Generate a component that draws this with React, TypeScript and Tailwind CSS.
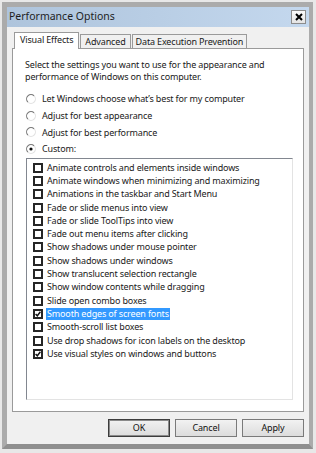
const items = [
  { label: "Animate controls and elements inside windows", checked: false },
  { label: "Animate windows when minimizing and maximizing", checked: false },
  { label: "Animations in the taskbar and Start Menu", checked: false },
  { label: "Fade or slide menus into view", checked: false },
  { label: "Fade or slide ToolTips into view", checked: false },
  { label: "Fade out menu items after clicking", checked: false },
  { label: "Show shadows under mouse pointer", checked: false },
  { label: "Show shadows under windows", checked: false },
  { label: "Show translucent selection rectangle", checked: false },
  { label: "Show window contents while dragging", checked: false },
  { label: "Slide open combo boxes", checked: false },
  { label: "Smooth edges of screen fonts", checked: true, selected: true },
  { label: "Smooth-scroll list boxes", checked: false },
  { label: "Use drop shadows for icon labels on the desktop", checked: false },
  { label: "Use visual styles on windows and buttons", checked: true },
];

const radios = [
  { label: "Let Windows choose what\u2019s best for my computer", checked: false },
  { label: "Adjust for best appearance", checked: false },
  { label: "Adjust for best performance", checked: false },
  { label: "Custom:", checked: true },
];

const Radio = ({ checked }: { checked: boolean }) => (
  <svg width="10" height="10" viewBox="0 0 10 10" className="shrink-0">
    <circle cx="5" cy="5" r="4.3" fill="#fff" />
    <path d="M8.1 1.9 A4.3 4.3 0 0 0 1.9 8.1" stroke="#7a7a7a" strokeWidth="1.1" fill="none" />
    <path d="M1.9 8.1 A4.3 4.3 0 0 0 8.1 1.9" stroke="#e2e2e2" strokeWidth="1.1" fill="none" />
    {checked && <circle cx="5" cy="5" r="1.6" fill="#111" />}
  </svg>
);

const CheckBox = ({ checked }: { checked: boolean }) => (
  <div className="w-[10px] h-[10px] border-2 border-[#262626] bg-white shrink-0 flex items-center justify-center">
    {checked && (
      <svg width="6" height="6" viewBox="0 0 6 6">
        <path d="M0.6 3 L2.3 4.8 L5.4 0.8" stroke="#111" strokeWidth="1.4" fill="none" />
      </svg>
    )}
  </div>
);

const Button = ({ label, primary }: { label: string; primary?: boolean }) => (
  <div
    className={`w-[62px] h-[18px] flex items-center justify-center bg-gradient-to-b from-[#f2f2f2] to-[#dcdcdc] border ${
      primary ? "border-[#3c3c3c] shadow-[inset_0_0_0_1px_#8a8a8a]" : "border-[#7a7a7a]"
    } text-[#111]`}
  >
    {label}
  </div>
);

export default function App() {
  return (
    <div
      className="w-[316px] h-[453px] bg-[#e8e8e8] pt-[2px] pl-[2px] pr-[3px] pb-[4px] text-[9px] tracking-[-0.15px] text-[#1a1a1a]"
      style={{ fontFamily: '"Noto Sans", "Open Sans", sans-serif' }}
    >
      <div className="h-full flex flex-col border-t-[5px] border-l-[5px] border-r-[4px] border-b-[5px] border-[#ababab] border-b-[#8f8f8f]">
        {/* title bar */}
        <div className="h-[20px] shrink-0 flex items-center justify-between pl-[2px] pr-[3px] bg-gradient-to-r from-[#aec4dc] to-[#c4d8ee]">
          <span className="text-[10.5px] tracking-normal text-[#1e1e1e]">Performance Options</span>
          <div className="w-[15px] h-[14px] flex items-center justify-center bg-gradient-to-b from-[#fbfbfb] to-[#e4e4e4] border border-[#8c8c8c]">
            <svg width="8" height="8" viewBox="0 0 8 8">
              <path d="M1 1 L7 7 M7 1 L1 7" stroke="#000" strokeWidth="2" />
            </svg>
          </div>
        </div>

        <div className="flex-1 flex flex-col bg-[#f0f0f0] pt-[4px] pl-[5px] pr-[5px] pb-[7px]">
          {/* tabs */}
          <div className="flex items-end h-[17px] pl-[2px] relative z-10">
            <div className="h-[17px] px-[5px] flex items-center bg-white border border-b-0 border-[#9a9a9a] -mb-px pb-[2px]">
              Visual Effects
            </div>
            <div className="h-[14px] px-[4px] flex items-center bg-[#f0f0f0] border border-b-0 border-[#9a9a9a] ml-[1px]">
              Advanced
            </div>
            <div className="h-[14px] px-[3px] flex items-center bg-[#f0f0f0] border border-b-0 border-[#9a9a9a] ml-[1px]">
              Data Execution Prevention
            </div>
          </div>

          {/* panel */}
          <div className="h-[364px] border border-[#9a9a9a] bg-white px-[12px] pt-[10px] flex flex-col">
            <p className="leading-[12px]">
              Select the settings you want to use for the appearance and
              <br />
              performance of Windows on this computer.
            </p>

            <div className="mt-[11px] flex flex-col gap-[6.7px] pl-[1px]">
              {radios.map((r) => (
                <div key={r.label} className="flex items-center gap-[6px] h-[10px]">
                  <Radio checked={r.checked} />
                  <span>{r.label}</span>
                </div>
              ))}
            </div>

            <div className="mt-[4px] ml-[1px] w-[267px] h-[242px] border border-[#828790] border-b-[#e3e3e3] border-r-[#e3e3e3] bg-white pt-[2px] pl-[6px]">
              {items.map((it) => (
                <div key={it.label} className="h-[13.3px] flex items-center gap-[3px]">
                  <CheckBox checked={it.checked} />
                  <span
                    className={`px-[1px] leading-[12px] ${
                      it.selected ? "bg-[#3399ff] text-white" : ""
                    }`}
                  >
                    {it.label}
                  </span>
                </div>
              ))}
            </div>
          </div>

          {/* buttons */}
          <div className="mt-auto flex justify-end gap-[5px]">
            <Button label="OK" primary />
            <Button label="Cancel" />
            <Button label="Apply" />
          </div>
        </div>
      </div>
    </div>
  );
}
